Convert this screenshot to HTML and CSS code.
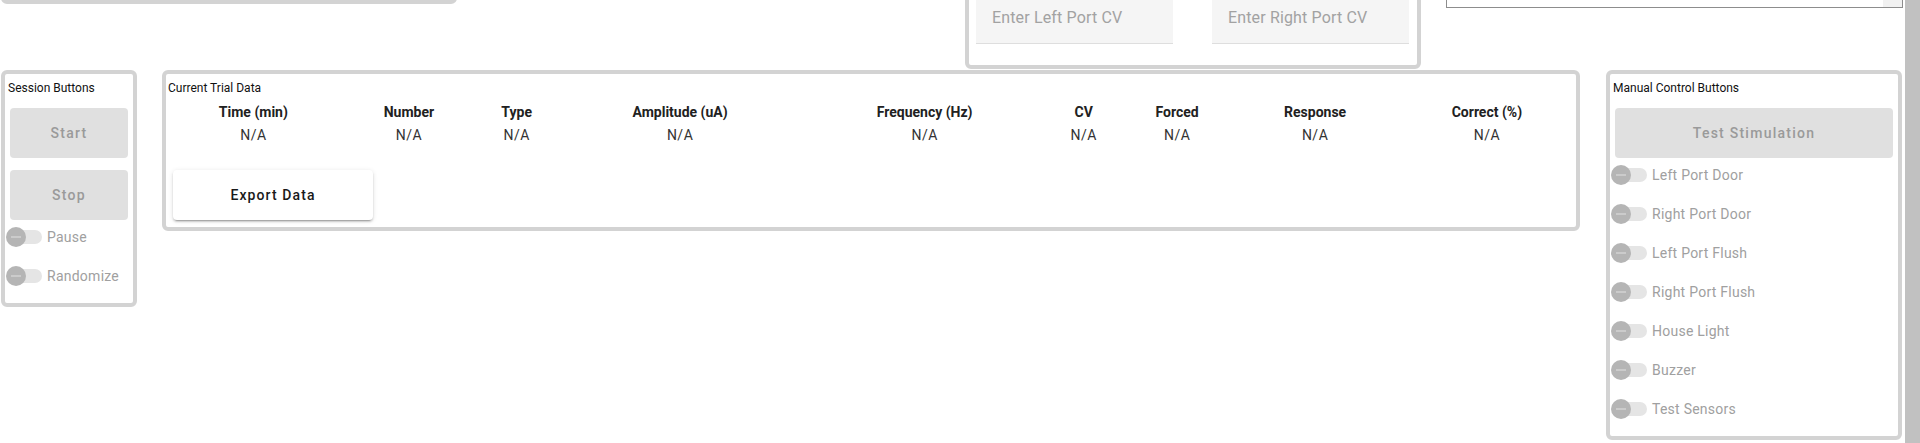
FILE: index.html
```html
<!DOCTYPE html>
<html lang="en">
<head>
<meta charset="utf-8">
<title>Trial Control</title>
<link rel="stylesheet" href="styles.css">
</head>
<body>
<div class="page">
  <div class="top-row">
    <div class="panel top-left"></div>
    <div class="panel cv-panel">
      <input class="cv-input" type="text" placeholder="Enter Left Port CV">
      <input class="cv-input" type="text" placeholder="Enter Right Port CV">
    </div>
    <div class="log-box"><div class="log-scroll"></div></div>
  </div>

  <div class="main-row">
    <section class="panel session">
      <div class="panel-title">Session Buttons</div>
      <button class="btn btn-disabled first-btn">Start</button>
      <button class="btn btn-disabled next-btn">Stop</button>
      <div class="switch-list">
        <label class="switch-row"><span class="switch"><span class="track"></span><span class="thumb"></span></span><span class="switch-label">Pause</span></label>
        <label class="switch-row"><span class="switch"><span class="track"></span><span class="thumb"></span></span><span class="switch-label">Randomize</span></label>
      </div>
    </section>

    <section class="panel trial">
      <div class="panel-title">Current Trial Data</div>
      <table class="trial-table">
        <tr>
          <th>Time (min)</th><th>Number</th><th>Type</th><th>Amplitude (uA)</th><th>Frequency (Hz)</th><th>CV</th><th>Forced</th><th>Response</th><th>Correct (%)</th>
        </tr>
        <tr>
          <td>N/A</td><td>N/A</td><td>N/A</td><td>N/A</td><td>N/A</td><td>N/A</td><td>N/A</td><td>N/A</td><td>N/A</td>
        </tr>
      </table>
      <button class="btn btn-raised">Export Data</button>
    </section>

    <section class="panel manual">
      <div class="panel-title">Manual Control Buttons</div>
      <button class="btn btn-disabled first-btn">Test Stimulation</button>
      <div class="switch-list">
        <label class="switch-row"><span class="switch"><span class="track"></span><span class="thumb"></span></span><span class="switch-label">Left Port Door</span></label>
        <label class="switch-row"><span class="switch"><span class="track"></span><span class="thumb"></span></span><span class="switch-label">Right Port Door</span></label>
        <label class="switch-row"><span class="switch"><span class="track"></span><span class="thumb"></span></span><span class="switch-label">Left Port Flush</span></label>
        <label class="switch-row"><span class="switch"><span class="track"></span><span class="thumb"></span></span><span class="switch-label">Right Port Flush</span></label>
        <label class="switch-row"><span class="switch"><span class="track"></span><span class="thumb"></span></span><span class="switch-label">House Light</span></label>
        <label class="switch-row"><span class="switch"><span class="track"></span><span class="thumb"></span></span><span class="switch-label">Buzzer</span></label>
        <label class="switch-row"><span class="switch"><span class="track"></span><span class="thumb"></span></span><span class="switch-label">Test Sensors</span></label>
      </div>
    </section>
  </div>
</div>
<div class="scrollbar"></div>
</body>
</html>
```
FILE: styles.css
```css
* { box-sizing: border-box; }

html, body {
  margin: 0;
  padding: 0;
  background: #ffffff;
}

body {
  display: flex;
  width: 1920px;
  height: 443px;
  overflow: hidden;
  font-family: Roboto, "Liberation Sans", Arial, sans-serif;
  color: #212121;
}

.page {
  width: 1905px;
  flex: none;
}

.scrollbar {
  width: 15px;
  flex: none;
  background: #c1c1c1;
}

/* ---------- top (scrolled-away) row ---------- */
.top-row {
  height: 70px;
  display: flex;
  align-items: flex-end;
  overflow: hidden;
}

.panel {
  border: 4px solid #d3d3d3;
  border-radius: 6px;
  background: #fff;
  flex: none;
}

.top-left {
  width: 456px;
  height: 120px;
  margin-left: 1px;
  margin-bottom: 66px;
}

.cv-panel {
  width: 456px;
  margin-left: 508px;
  margin-bottom: 1px;
  display: flex;
  align-items: flex-end;
  gap: 39px;
  padding: 0 8px 21px 7px;
}

.cv-input {
  width: 197px;
  height: 56px;
  border: none;
  border-bottom: 1px solid #dedede;
  border-radius: 4px 4px 0 0;
  background: #f5f5f5;
  padding: 4px 16px 0;
  font-family: Roboto, "Liberation Sans", Arial, sans-serif;
  font-size: 16px;
  color: #212121;
  outline: none;
}

.cv-input::placeholder {
  color: #a2a2a2;
  letter-spacing: 0.15px;
}

.log-box {
  width: 457px;
  height: 120px;
  margin-left: 25px;
  margin-bottom: 62px;
  border: 1px solid #8d8d8d;
  background: #fff;
  display: flex;
  justify-content: flex-end;
  flex: none;
}

.log-scroll {
  width: 19px;
  background: #f1f1f1;
}

/* ---------- main row ---------- */
.main-row {
  display: flex;
  align-items: flex-start;
}

.panel-title {
  font-size: 12px;
  line-height: 14px;
  margin-top: 7px;
  color: #111;
}

.session {
  width: 136px;
  margin-left: 1px;
  padding: 0 3px 10px;
}

.trial {
  width: 1418px;
  margin-left: 25px;
  padding: 0 0 7px;
}

.trial .panel-title {
  padding-left: 2px;
}

.manual {
  width: 296px;
  margin-left: 26px;
  padding: 0 3px 10px;
}

/* ---------- buttons ---------- */
.btn {
  display: block;
  height: 50px;
  border: none;
  border-radius: 4px;
  font-family: Roboto, "Liberation Sans", Arial, sans-serif;
  font-size: 14px;
  font-weight: 500;
  letter-spacing: 1.25px;
}

.btn-disabled {
  width: calc(100% - 4px);
  margin-left: 2px;
  background: #e0e0e0;
  color: #9a9a9a;
}

.first-btn { margin-top: 13px; }
.next-btn { margin-top: 12px; }

.btn-raised {
  width: 200px;
  margin: 22px 0 0 7px;
  background: #fff;
  color: #1a1a1a;
  letter-spacing: 1.1px;
  box-shadow: 0 3px 1px -2px rgba(0,0,0,.2), 0 2px 2px 0 rgba(0,0,0,.14), 0 1px 5px 0 rgba(0,0,0,.12);
}

/* ---------- switches ---------- */
.switch-list {
  display: flex;
  flex-direction: column;
  gap: 5px;
}

.switch-row {
  height: 34px;
  display: flex;
  align-items: center;
  margin-left: -2px;
}

.switch {
  position: relative;
  width: 36px;
  height: 20px;
  flex: none;
}

.track {
  position: absolute;
  left: 2px;
  right: 0;
  top: 3px;
  height: 14px;
  border-radius: 7px;
  background: #e5e5e5;
}

.thumb {
  position: absolute;
  left: 0;
  top: 0;
  width: 20px;
  height: 20px;
  border-radius: 50%;
  background: #b5b5b5;
}

.thumb::after {
  content: "";
  position: absolute;
  left: 5px;
  top: 9px;
  width: 10px;
  height: 2px;
  background: #cbcbcb;
}

.switch-label {
  margin-left: 5px;
  font-size: 14px;
  letter-spacing: 0.25px;
  color: #a0a0a0;
}

/* ---------- table ---------- */
.trial-table {
  width: calc(100% + 6px);
  margin: 5px -3px 0;
  text-align: center;
}

.trial-table th,
.trial-table td {
  padding: 1px;
  font-size: 14px;
  line-height: 19px;
}

.trial-table th {
  font-weight: 700;
  color: #212121;
}

.trial-table td {
  font-weight: 400;
  color: #333;
  letter-spacing: 0.5px;
}
```
